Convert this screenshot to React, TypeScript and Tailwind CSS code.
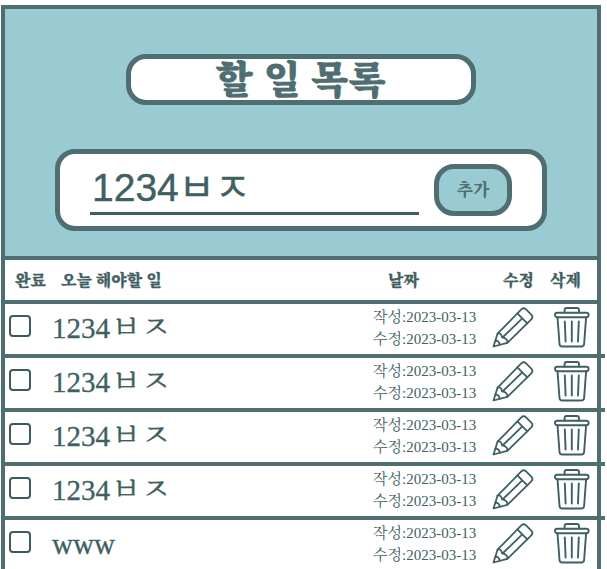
const serif = "font-['Liberation_Serif','Noto_Serif_CJK_KR','Noto_Sans_CJK_KR',serif]";
const heading = "font-['Noto_Serif_CJK_KR','Noto_Sans_CJK_KR',serif] font-black";

function Pencil() {
  return (
    <svg width="42" height="42" viewBox="0 0 42 42" fill="none" stroke="currentColor" strokeWidth="1.8" strokeLinejoin="round" strokeLinecap="round">
      <path d="M1.5 40.5 5.6 27.6 29.3 3.4Q31.7 1.2 34.1 3.4L39.3 8.6Q41.6 11 39.3 13.3L15.3 36.9Z" />
      <path d="M25.4 7.4 35.3 17.3M30 12.6 11 31M5.6 27.6C7.3 26.7 9.8 28 10 31.4 13.4 31.6 15.9 34 15.3 36.9M3.5 34.4C5.7 34.7 7.4 36.4 7.8 38.7" />
    </svg>
  );
}

function Trash() {
  return (
    <svg width="36" height="42" viewBox="0 0 36 42" fill="none" stroke="currentColor" strokeWidth="1.9" strokeLinejoin="round" strokeLinecap="round">
      <rect x="1" y="6.8" width="33.6" height="4.4" rx="2.2" />
      <path d="M10.6 6.6V4Q10.6 2 12.6 2H23Q25 2 25 4V6.6M3.5 11.4 5.5 38Q5.7 40.5 8.2 40.5H27.4Q29.9 40.5 30.1 38L32.1 11.4M10.8 15.5 11.6 35.5M17.8 15.5V35.5M24.8 15.5 24 35.5" />
    </svg>
  );
}

function Row({ text, jamo }: { text: string; jamo?: string }) {
  return (
    <div className="flex h-[54px] w-[600px] shrink-0 items-center border-b-4 border-[#4e6e71] pb-[3px]">
      <div className="mb-[3px] ml-1 size-[22px] rounded-[4px] border-2 border-[#3d5c60]" />
      <div className={`ml-[21px] flex w-[321px] items-baseline text-[29px] leading-[44px] [-webkit-text-stroke:0.3px_#3f5f62] ${serif}`}>
        <span>{text}</span>
        {jamo && <span className="ml-px text-[31px] leading-[46px]">{jamo}</span>}
      </div>
      <div className={`w-[119px] text-[15px] leading-[22px] ${serif}`}>
        <div>작성:2023-03-13</div>
        <div>수정:2023-03-13</div>
      </div>
      <div className="mb-[2px] flex gap-5">
        <Pencil />
        <Trash />
      </div>
    </div>
  );
}

export default function App() {
  const items = [
    { text: "1234", jamo: "ㅂㅈ" },
    { text: "1234", jamo: "ㅂㅈ" },
    { text: "1234", jamo: "ㅂㅈ" },
    { text: "1234", jamo: "ㅂㅈ" },
    { text: "www" },
  ];
  return (
    <div className="h-[569px] w-[607px] overflow-hidden bg-white pl-px pt-[5px] text-[#3f5f62]">
      <div className="flex h-[600px] w-[600px] flex-col border-4 border-[#4e6e71]">
        <header className="flex h-[247px] shrink-0 flex-col items-center bg-[#9bcbd2] pt-[45px]">
          <h1 className={`flex h-[51px] w-[350px] items-center justify-center rounded-[20px] border-[5px] border-[#4e6e71] bg-white pb-[6px] text-[38px] leading-none tracking-[0.8px] text-[#4e6e71] [-webkit-text-stroke:0.9px_#4e6e71] ${heading}`}>
            할 일 목록
          </h1>
          <div className="mt-11 flex h-[82px] w-[492px] rounded-[20px] border-[5px] border-[#4e6e71] bg-white pl-[30px] pt-[10px]">
            <div className="h-[51px] w-[329px] border-b-[3px] border-[#3f5f62] pl-[2px] font-['Liberation_Sans','Noto_Sans_CJK_KR',sans-serif] text-[39px] leading-[47px] [-webkit-text-stroke:0.4px_#3f5f62]">
              1234ㅂㅈ
            </div>
            <button className={`ml-[15px] h-[52px] w-[78px] rounded-[20px] border-[5px] border-[#4e6e71] bg-[#9bcbd2] pb-[2px] text-[17px] text-[#4e6e71] ${heading}`}>
              추가
            </button>
          </div>
        </header>
        <div className={`flex h-12 shrink-0 items-center border-y-4 border-[#4e6e71] text-[16px] leading-none [-webkit-text-stroke:0.3px_#3f5f62] ${heading}`}>
          <span className="ml-[10px] w-[46px]">완료</span>
          <span className="w-[327px]">오늘 해야할 일</span>
          <span className="w-[115px]">날짜</span>
          <span className="w-[47px]">수정</span>
          <span>삭제</span>
        </div>
        {items.map((item, i) => <Row key={i} text={item.text} jamo={item.jamo} />)}
      </div>
    </div>
  );
}
